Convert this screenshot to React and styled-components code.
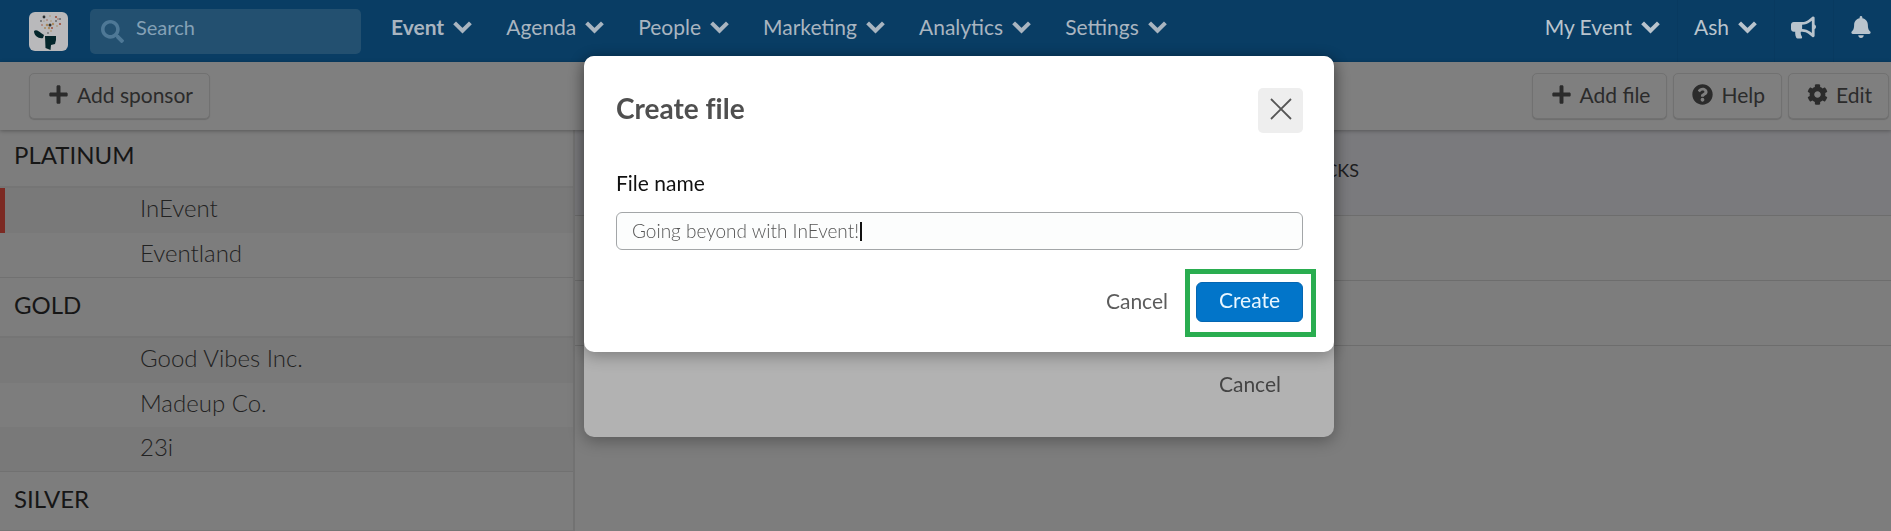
import React from 'react'
import styled, { createGlobalStyle, css } from 'styled-components';
import { FaBell, FaBullhorn, FaCog, FaPlus, FaQuestionCircle, FaSearch } from 'react-icons/fa';

const menus = ['Event', 'Agenda', 'People', 'Marketing', 'Analytics', 'Settings'];

const sponsorGroups = [
    { name: 'PLATINUM', sponsors: ['InEvent', 'Eventland'] },
    { name: 'GOLD', sponsors: ['Good Vibes Inc.', 'Madeup Co.', '23i'] },
    { name: 'SILVER', sponsors: [] },
];

const Chevron = () => (
    <svg width="19" height="13" viewBox="0 0 19 13" fill="none" stroke="currentColor" strokeWidth="4">
        <path d="M1.6 1.8 9.5 9.7 17.4 1.8" />
    </svg>
)

const EventLogo = () => (
    <svg width="39" height="39" viewBox="0 0 39 39">
        <path d="M5 19c2-2 5 0 7 2l3 2-1 3c-4 1-9-2-9-7z" fill="#04262b" />
        <path d="M16 24h11v4l-1 4-4 1-.5 5-5-2z" fill="#04262b" />
        <g fill="#2b2f31">
            <circle cx="15" cy="5" r="1.4" />
            <circle cx="21" cy="13" r="1.5" />
            <circle cx="12" cy="9" r=".8" />
            <circle cx="27" cy="9" r=".8" />
            <circle cx="31" cy="7" r=".8" />
            <circle cx="19" cy="21" r=".7" />
        </g>
        <g fill="#9c4f3c">
            <circle cx="27" cy="5" r="1.1" />
            <circle cx="31" cy="12" r="1.1" />
            <circle cx="13" cy="13" r=".8" />
            <circle cx="23" cy="16" r="1" />
            <circle cx="18" cy="8" r=".7" />
            <circle cx="29" cy="7" r=".7" />
        </g>
        <g fill="#a98a5e">
            <circle cx="18" cy="13" r="1.3" />
            <circle cx="24" cy="12" r="1.2" />
            <circle cx="16" cy="16" r="1" />
            <circle cx="28" cy="14" r=".8" />
            <circle cx="21" cy="4" r=".7" />
            <circle cx="20" cy="16" r="1.2" />
            <circle cx="22" cy="19" r=".8" />
            <circle cx="15" cy="9" r=".6" />
            <circle cx="22" cy="9" r=".7" />
        </g>
    </svg>
)

const SponsorGroup = ({ name, sponsors, selected }) => (
    <section>
        <GroupTitle>{name}</GroupTitle>
        <SponsorList>
            {sponsors.map(sponsor => (
                <Sponsor key={sponsor} $selected={sponsor === selected}>{sponsor}</Sponsor>
            ))}
        </SponsorList>
    </section>
)

const App = () => {
  return (
    <Page>
        <GlobalStyle />

        <TopBar>
            <Logo href="#" aria-label="Home"><EventLogo /></Logo>
            <Search>
                <FaSearch />
                <SearchInput aria-label="Search" placeholder="Search" />
            </Search>
            <Menu>
                {menus.map((menu, i) => (
                    <MenuButton key={menu} $active={i === 0}>{menu}<Chevron /></MenuButton>
                ))}
            </Menu>
            <Account>
                <AccountButton>My Event<Chevron /></AccountButton>
                <AccountButton>Ash<Chevron /></AccountButton>
                <AccountButton aria-label="Announcements"><FaBullhorn size={25} /></AccountButton>
                <AccountButton aria-label="Notifications"><FaBell size={22} /></AccountButton>
            </Account>
        </TopBar>

        <Toolbar>
            <ToolButton><FaPlus />Add sponsor</ToolButton>
            <ToolGroup>
                <ToolButton><FaPlus />Add file</ToolButton>
                <ToolButton><FaQuestionCircle />Help</ToolButton>
                <ToolButton><FaCog />Edit</ToolButton>
            </ToolGroup>
        </Toolbar>

        <Content>
            <Sidebar>
                {sponsorGroups.map(group => (
                    <SponsorGroup key={group.name} selected="InEvent" {...group} />
                ))}
            </Sidebar>
            <Files>
                <thead>
                    <tr><th>FILE</th><th>CLICKS</th><th /></tr>
                </thead>
                <tbody>
                    <tr><td /><td /><td /></tr>
                    <tr><td /><td /><td /></tr>
                </tbody>
            </Files>
        </Content>

        {/* the sponsor dialog stays open behind the file dialog */}
        <Layer>
            <BackDialog>
                <TextButton>Cancel</TextButton>
            </BackDialog>
        </Layer>

        <Layer>
            <Dialog role="dialog" aria-labelledby="dialog-title">
                <DialogHeader>
                    <DialogTitle id="dialog-title">Create file</DialogTitle>
                    <CloseButton aria-label="Close">
                        <svg width="22" height="22" viewBox="0 0 22 22" stroke="currentColor" strokeWidth="1.8">
                            <path d="M1 1 21 21M21 1 1 21" />
                        </svg>
                    </CloseButton>
                </DialogHeader>
                <Label htmlFor="file-name">File name</Label>
                <Field>
                    <FileInput id="file-name" defaultValue="Going beyond with InEvent!" />
                    <Caret />
                </Field>
                <Actions>
                    <TextButton>Cancel</TextButton>
                    <Highlight>
                        <CreateButton>Create</CreateButton>
                    </Highlight>
                </Actions>
            </Dialog>
        </Layer>
    </Page>
  )
}

export default App;

const GlobalStyle = createGlobalStyle`
    * {
        box-sizing: border-box;
    }

    body {
        margin: 0;
        background: #7d7d7d;
        font-family: Lato, sans-serif;
        overflow: hidden;
    }

    button, input {
        font-family: inherit;
    }

    button {
        cursor: pointer;
    }
`;

const Page = styled.div`
    height: 100vh;
    display: flex;
    flex-direction: column;
    overflow: hidden;
`;

const TopBar = styled.header`
    display: flex;
    align-items: center;
    flex-shrink: 0;
    height: 62px;
    padding-left: 29px;
    background: #093d64;
`;

const Logo = styled.a`
    display: flex;
    border-radius: 6px;
    background: #b9b9bb;
`;

const Search = styled.div`
    display: flex;
    align-items: center;
    gap: 10px;
    width: 271px;
    height: 45px;
    margin-left: 22px;
    padding-left: 11px;
    border-radius: 5px;
    background: #235070;
    color: #4e7896;
    font-size: 23px;
`;

const SearchInput = styled.input`
    flex: 1;
    min-width: 0;
    padding: 0 2px 8px;
    border: none;
    outline: none;
    background: none;
    color: #a9b5c0;
    font-size: 20px;

    &::placeholder {
        color: #84a1b6;
    }
`;

const Menu = styled.nav`
    display: flex;
    gap: 34px;
    margin-left: 30px;
    padding-bottom: 8px;
`;

const barButton = css`
    display: flex;
    align-items: center;
    gap: 9px;
    padding: 0;
    border: none;
    background: none;
    font-size: 21px;
    line-height: 26px;
`;

const MenuButton = styled.button`
    ${barButton}
    color: #a9b5c0;
    font-weight: ${({ $active }) => ($active ? 700 : 400)};
`;

const Account = styled.div`
    display: flex;
    align-self: stretch;
    margin-left: auto;
    padding-right: 2px;
`;

const AccountButton = styled.button`
    ${barButton}
    padding: 0 17px 8px 16px;
    border-left: 1px solid #083a60;
    color: #b9c4cd;

    &:first-child {
        border-left: none;
    }
`;

const Toolbar = styled.div`
    display: flex;
    align-items: center;
    justify-content: space-between;
    flex-shrink: 0;
    height: 68px;
    padding: 0 2px 0 29px;
    background: #7f7f7f;
    box-shadow: 0 1px 4px rgba(0, 0, 0, 0.3);
    z-index: 1;
`;

const ToolGroup = styled.div`
    display: flex;
    gap: 6px;
`;

const ToolButton = styled.button`
    display: flex;
    align-items: center;
    gap: 8px;
    height: 46px;
    padding: 0 16px 3px 18px;
    border: 1px solid #717171;
    border-radius: 5px;
    background: #7f7f7f;
    box-shadow: 0 1px 1px rgba(0, 0, 0, 0.15);
    color: #2b2b2b;
    font-size: 21px;
`;

const Content = styled.div`
    display: flex;
    flex: 1;
    min-height: 0;
`;

const Sidebar = styled.aside`
    flex: 0 0 575px;
    overflow: hidden;
    border-right: 2px solid #727272;
`;

const GroupTitle = styled.h2`
    margin: 0;
    padding: 13px 14px 18px;
    border-bottom: 2px solid #757575;
    color: #161616;
    font-size: 24px;
    font-weight: 400;
    line-height: 27px;

    section:first-child > & {
        padding-top: 11px;
    }
`;

const SponsorList = styled.ul`
    margin: 0;
    padding: 0;
    list-style: none;
    border-bottom: 1px solid #717171;
`;

const Sponsor = styled.li`
    height: 44px;
    padding-left: ${({ $selected }) => ($selected ? '135px' : '140px')};
    border-left: ${({ $selected }) => ($selected ? '5px solid #7c2a23' : 'none')};
    color: #222;
    font-size: 24px;
    font-weight: 300;
    line-height: 39px;

    &:first-child {
        height: 45px;
    }

    &:nth-child(odd) {
        background: #797979;
    }
`;

const Files = styled.table`
    flex: 1;
    align-self: flex-start;
    display: table;
    border-collapse: collapse;
    table-layout: fixed;

    th {
        height: 85px;
        padding: 0 0 4px;
        background: #7a7a7d;
        color: #1d1d20;
        font-size: 18px;
        font-weight: 400;
        text-align: right;
    }

    th:nth-child(2) {
        width: 392px;
    }

    th:last-child {
        width: 532px;
    }

    td {
        height: 65px;
    }

    tr {
        border-bottom: 1px solid #6d6d6d;
    }
`;

/* centres a dialog over the page */
const Layer = styled.div`
    position: fixed;
    inset: 0;
    z-index: 2;
    display: flex;
    align-items: flex-start;
    justify-content: center;
    padding: 56px 0 0 27px;
`;

const Dialog = styled.div`
    width: 750px;
    padding: 32px 31px 15px 32px;
    border-radius: 10px;
    background: #fff;
    box-shadow: 0 4px 16px rgba(0, 0, 0, 0.3);
    color: #5c5c5c;
`;

const BackDialog = styled(Dialog)`
    display: flex;
    align-items: flex-end;
    justify-content: flex-end;
    height: 381px;
    padding: 0 53px 34px;
    background: #b2b2b2;
    color: #444;
`;

const DialogHeader = styled.div`
    display: flex;
    align-items: flex-start;
    justify-content: space-between;
`;

const DialogTitle = styled.h1`
    margin: 3px 0 0;
    color: #4f4f4f;
    font-size: 28px;
    font-weight: 700;
    line-height: 34px;
    font-variant-ligatures: none;
`;

const CloseButton = styled.button`
    display: flex;
    align-items: center;
    justify-content: center;
    width: 45px;
    height: 45px;
    padding: 0 0 4px;
    border: none;
    border-radius: 5px;
    background: #eee;
    color: #555;
`;

const Label = styled.label`
    display: block;
    margin-top: 37px;
    color: #111;
    font-size: 21px;
    line-height: 26px;
`;

const Field = styled.div`
    display: flex;
    align-items: center;
    height: 38px;
    margin-top: 16px;
    padding: 0 15px;
    border: 1px solid #a3a6a8;
    border-radius: 6px;
    background: #fcfdfd;
`;

const FileInput = styled.input`
    field-sizing: content;
    max-width: 100%;
    padding: 0 1px 2px 0;
    border: none;
    outline: none;
    background: none;
    caret-color: transparent;
    color: #555;
    font-size: 19px;
    font-weight: 300;
`;

const Caret = styled.span`
    width: 2px;
    height: 19px;
    background: #111;
`;

const Actions = styled.div`
    display: flex;
    align-items: center;
    justify-content: flex-end;
    gap: 17px;
    margin: 19px -13px 0 0;
`;

const TextButton = styled.button`
    padding: 0 0 5px;
    border: none;
    background: none;
    color: inherit;
    font-size: 21px;
    line-height: 28px;
`;

/* green frame round the button that the user should press */
const Highlight = styled.div`
    padding: 8px 8px 10px 6px;
    border: 5px solid #2aad50;
`;

const CreateButton = styled.button`
    width: 107px;
    height: 40px;
    padding: 0 0 5px;
    border: 1px solid #0466b2;
    border-radius: 6px;
    background: #0275c9;
    color: #e8f6ff;
    font-size: 21px;
`;
